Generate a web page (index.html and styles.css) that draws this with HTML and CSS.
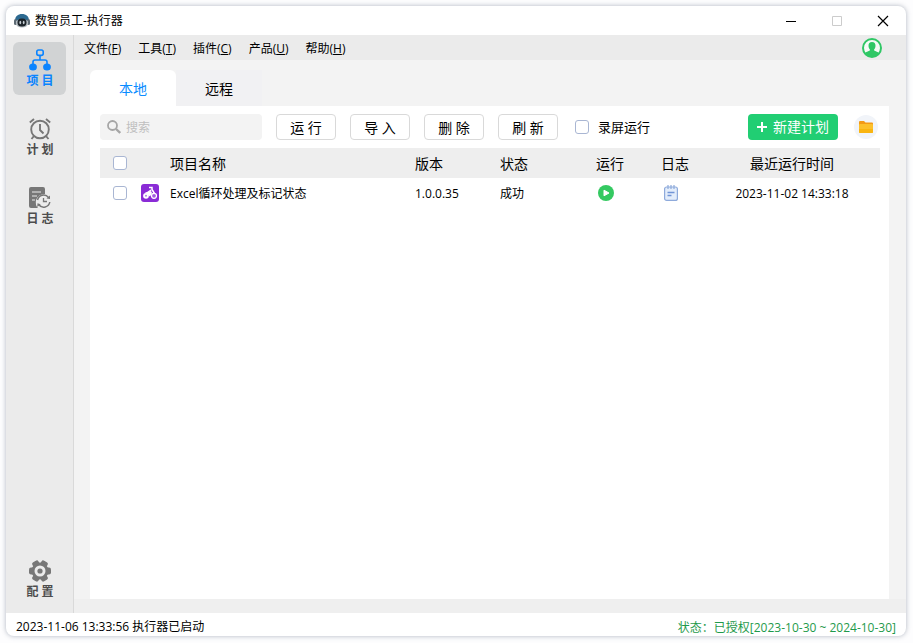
FILE: index.html
```html
<!DOCTYPE html>
<html lang="zh-CN">
<head>
    <meta charset="UTF-8">
    <meta name="viewport" content="width=device-width, initial-scale=1.0">
    <title>数智员工-执行器</title>
    <link rel="stylesheet" href="styles.css">
</head>
<body>
    <div class="window">
        <header class="titlebar">
            <svg class="logo" width="16" height="16" viewBox="0 0 16 16">
                <path d="M1 8C1 3 4 1 8 1s7 2 7 7v1H1z" fill="#2d6a91"/>
                <rect x="0" y="6" width="3" height="6" rx="1.500" fill="#5d6a74"/>
                <rect x="13" y="6" width="3" height="6" rx="1.500" fill="#5d6a74"/>
                <path d="M2 8q6-4 12 0v3q-1 3.500-6 3.500T2 11z" fill="#b4bcc2"/>
                <rect x="3.500" y="5.500" width="9" height="8" rx="4" fill="#1d242a"/>
                <ellipse cx="6.300" cy="9.500" rx=".9" ry="1.800" fill="#c8d0d6"/>
                <ellipse cx="9.700" cy="9.500" rx=".9" ry="1.800" fill="#c8d0d6"/>
            </svg>
            <h1>数智员工-执行器</h1>
            <div class="window-controls">
                <button type="button" aria-label="最小化">
                    <svg width="12" height="12" viewBox="0 0 12 12"><path d="M1 6.500h10" stroke="#000"/></svg>
                </button>
                <button type="button" aria-label="最大化" disabled>
                    <svg width="12" height="12" viewBox="0 0 12 12"><path d="M1.500 1.500h9v9h-9z" fill="none" stroke="#ccc"/></svg>
                </button>
                <button type="button" aria-label="关闭">
                    <svg width="12" height="12" viewBox="0 0 12 12"><path d="M1 1l10 10M11 1L1 11" stroke="#000" stroke-width="1.200"/></svg>
                </button>
            </div>
        </header>

        <div class="body">
            <nav class="sidebar">
                <a href="#project" class="side-item active">
                    <svg width="22" height="22" viewBox="0 0 22 22" fill="none" stroke="#0a84ff" stroke-width="1.600">
                        <rect x="7.800" y="1" width="6.400" height="5.400" rx="1.800"/>
                        <path d="M11 6.500v5M4 15v-2q0-2 2-2h10q2 0 2 2v2"/>
                        <ellipse cx="4" cy="18" rx="3.900" ry="3.600" fill="#0a84ff" stroke="none"/>
                        <ellipse cx="18" cy="18" rx="3.900" ry="3.600" fill="#0a84ff" stroke="none"/>
                    </svg>
                    <span>项 目</span>
                </a>
                <a href="#plan" class="side-item">
                    <svg width="22" height="22" viewBox="0 0 22 22" fill="none" stroke="#777" stroke-width="1.900">
                        <circle cx="11" cy="11.500" r="8.800"/>
                        <path d="M11 6v6l3.500 3.500M.8 4.500L5 1M21.200 4.500L17 1M5 18l-2.500 3M17 18l2.500 3"/>
                    </svg>
                    <span>计 划</span>
                </a>
                <a href="#log" class="side-item">
                    <svg width="22" height="22" viewBox="0 0 22 22" fill="none">
                        <path d="M2 0h12q2 0 2 2v5q-7 0-9 6-1 5 2 8H2q-2 0-2-2V2q0-2 2-2z" fill="#777"/>
                        <path d="M3 5h9M3 9h5M3 13h3" stroke="#ebebeb" stroke-width="1.200"/>
                        <path d="M8.500 13a6.200 6.200 0 0 1 11-2.500M20.800 15a6.200 6.200 0 0 1-11 2.800" stroke="#777" stroke-width="1.500"/>
                        <path d="M17.500 11.500l3.500.500V8.500zM8.200 20l.3-3.700 3.200 1z" fill="#777"/>
                        <path d="M14.500 11v3.500h3.500" stroke="#777" stroke-width="1.300"/>
                    </svg>
                    <span>日 志</span>
                </a>
                <a href="#config" class="side-item side-bottom">
                    <svg width="22" height="22" viewBox="0 0 22 22" fill="none">
                        <g fill="#777">
                            <circle cx="11" cy="11" r="8.500"/>
                            <rect x="0" y="7.500" width="22" height="7" rx="2"/>
                            <rect x="0" y="7.500" width="22" height="7" rx="2" transform="rotate(60 11 11)"/>
                            <rect x="0" y="7.500" width="22" height="7" rx="2" transform="rotate(120 11 11)"/>
                        </g>
                        <circle cx="11" cy="11" r="5.500" fill="#ebebeb"/>
                        <circle cx="11" cy="11" r="2.600" fill="#777"/>
                    </svg>
                    <span>配 置</span>
                </a>
            </nav>

            <div class="content">
                <div class="menubar">
                    <button type="button">文件(<u>F</u>)</button>
                    <button type="button">工具(<u>T</u>)</button>
                    <button type="button">插件(<u>C</u>)</button>
                    <button type="button">产品(<u>U</u>)</button>
                    <button type="button">帮助(<u>H</u>)</button>
                    <button type="button" class="user" aria-label="用户">
                        <svg width="20" height="20" viewBox="0 0 20 20">
                            <circle cx="10" cy="10" r="9" fill="#f5fbf7" stroke="#2fc765" stroke-width="2"/>
                            <path d="M10 4c2.400 0 3.600 1.600 3.500 4-.1 1.800-.8 3-1.500 3.800 0 1.400 3.500 1.700 5 3.400A9 9 0 0 1 10 19a9 9 0 0 1-7-3.800c1.500-1.700 5-2 5-3.400C7.300 11 6.600 9.800 6.500 8 6.400 5.600 7.600 4 10 4z" fill="#2fc765"/>
                        </svg>
                    </button>
                </div>

                <main class="workspace">
                    <div class="tabs" role="tablist">
                        <button type="button" role="tab" class="tab active" aria-selected="true">本地</button>
                        <button type="button" role="tab" class="tab" aria-selected="false">远程</button>
                    </div>

                    <section class="panel">
                        <div class="toolbar">
                            <label class="search">
                                <svg width="14" height="14" viewBox="0 0 14 14" fill="none" stroke="#a6a6a6">
                                    <circle cx="5.500" cy="5.500" r="4.500" stroke-width="1.800"/>
                                    <path d="M9 9l4.200 4" stroke-width="2.400"/>
                                </svg>
                                <input type="text" placeholder="搜索" aria-label="搜索">
                            </label>
                            <button type="button" class="btn">运 行</button>
                            <button type="button" class="btn">导 入</button>
                            <button type="button" class="btn">删 除</button>
                            <button type="button" class="btn">刷 新</button>
                            <label class="record"><input type="checkbox" class="check">录屏运行</label>
                            <button type="button" class="btn-new">
                                <svg width="10" height="10" viewBox="0 0 10 10"><path d="M5 0v10M0 5h10" stroke="#fff" stroke-width="2"/></svg>
                                新建计划
                            </button>
                            <button type="button" class="btn-folder" aria-label="打开文件夹">
                                <svg width="14" height="12" viewBox="0 0 14 12">
                                    <path d="M0 1q0-1 1-1h4l1.500 1.500H13q1 0 1 1V6H0z" fill="#f39a17"/>
                                    <path d="M0 4q0-1 1-1h12q1 0 1 1v7q0 1-1 1H1q-1 0-1-1z" fill="#fcc02c"/>
                                    <path d="M0 8h14v3q0 1-1 1H1q-1 0-1-1z" fill="#f9b512"/>
                                </svg>
                            </button>
                        </div>

                        <table class="projects">
                            <colgroup>
                                <col class="col-check">
                                <col class="col-icon">
                                <col class="col-name">
                                <col class="col-version">
                                <col class="col-status">
                                <col class="col-run">
                                <col class="col-log">
                                <col class="col-time">
                            </colgroup>
                            <thead>
                                <tr>
                                    <th class="cell-check"><input type="checkbox" class="check" aria-label="全选"></th>
                                    <th></th>
                                    <th>项目名称</th>
                                    <th>版本</th>
                                    <th>状态</th>
                                    <th>运行</th>
                                    <th>日志</th>
                                    <th class="cell-time">最近运行时间</th>
                                </tr>
                            </thead>
                            <tbody>
                                <tr>
                                    <td class="cell-check"><input type="checkbox" class="check" aria-label="选择项目"></td>
                                    <td class="cell-icon">
                                        <svg width="18" height="18" viewBox="0 0 18 18">
                                            <rect width="18" height="18" rx="3" fill="#8a2bd6"/>
                                            <path d="M8 3.500h3v2l2.500 4M10 6L6 9" fill="none" stroke="#fff" stroke-width="1.500"/>
                                            <path d="M4 8.500l6-1.500 1 2-2 3.500z" fill="#fff"/>
                                            <circle cx="5" cy="11.800" r="2.900" fill="#fff"/>
                                            <circle cx="5" cy="11.800" r="1" fill="#b678e8"/>
                                            <circle cx="13" cy="11.800" r="2.500" fill="#a55be0" stroke="#fff" stroke-width="1.200"/>
                                        </svg>
                                    </td>
                                    <td>Excel循环处理及标记状态</td>
                                    <td>1.0.0.35</td>
                                    <td>成功</td>
                                    <td>
                                        <button type="button" class="icon-btn" aria-label="运行">
                                            <svg width="16" height="16" viewBox="0 0 16 16">
                                                <circle cx="8" cy="8" r="8" fill="#34c961"/>
                                                <path d="M6 5.200v5.600L11 8z" fill="#fff" stroke="#fff" stroke-linejoin="round"/>
                                            </svg>
                                        </button>
                                    </td>
                                    <td>
                                        <button type="button" class="icon-btn" aria-label="日志">
                                            <svg width="16" height="16" viewBox="0 0 16 16" fill="none" stroke="#8eaadb">
                                                <rect x="1.600" y="2" width="12.800" height="13.400" rx="2" fill="#e3edfb" stroke-width="1.200"/>
                                                <path d="M5 0v4M8 0v4M11 0v4" stroke-width="1.200"/>
                                                <path d="M4.500 7.500h7M4.500 10.500h4" stroke="#7195d6" stroke-width="1.300"/>
                                            </svg>
                                        </button>
                                    </td>
                                    <td class="cell-time">2023-11-02 14:33:18</td>
                                </tr>
                            </tbody>
                        </table>
                    </section>
                </main>
            </div>
        </div>

        <footer class="statusbar">
            <span>2023-11-06 13:33:56 执行器已启动</span>
            <span class="license">状态<span class="colon">：</span>已授权[2023-10-30 ~ 2024-10-30]</span>
        </footer>
    </div>
</body>
</html>
```
FILE: styles.css
```css
* {
    margin: 0;
    padding: 0;
    box-sizing: border-box;
}

body {
    display: flex;
    height: 100vh;
    padding: 6px 7px 7px 6px;
    background-color: #fdfdfe;
    font-family: 'Open Sans', 'Noto Sans CJK SC', sans-serif;
    font-size: 12px;
    line-height: 18px;
    color: #000;
}

button {
    border: none;
    background: none;
    font: inherit;
    color: inherit;
    cursor: pointer;
}

svg {
    display: block;
    flex-shrink: 0;
}

.window {
    flex: 1;
    display: flex;
    flex-direction: column;
    border-radius: 8px;
    overflow: hidden;
    background-color: #fff;
    box-shadow: 0 0 5px rgba(60, 75, 100, 0.4);
}

/* title bar */
.titlebar {
    display: flex;
    align-items: center;
    height: 29px;
    padding-left: 8px;
}

.titlebar h1 {
    margin-left: 5px;
    font-size: 12px;
    font-weight: normal;
}

.window-controls {
    display: flex;
    margin-left: auto;
}

.window-controls button {
    display: flex;
    align-items: center;
    justify-content: center;
    width: 46px;
    height: 28px;
}

.body {
    flex: 1;
    display: flex;
    min-height: 0;
}

/* sidebar */
.sidebar {
    display: flex;
    flex-direction: column;
    align-items: center;
    gap: 16px;
    width: 68px;
    padding: 7px 0;
    background-color: #ebebeb;
    border-right: 1px solid #d9d9d9;
}

.side-item {
    display: flex;
    flex-direction: column;
    align-items: center;
    gap: 1px;
    width: 53px;
    height: 53px;
    padding: 7px 0 0 1px;
    border-radius: 6px;
    color: #4d4d4d;
    font-size: 12px;
    font-weight: bold;
    text-decoration: none;
}

.side-item.active {
    background-color: #d1d3d4;
    color: #0a84ff;
}

.side-bottom {
    margin-top: auto;
}

.content {
    flex: 1;
    display: flex;
    flex-direction: column;
    min-width: 0;
    background-color: #f3f3f3;
}

/* menu */
.menubar {
    display: flex;
    align-items: center;
    gap: 17px;
    height: 25px;
    padding: 0 24px 0 10px;
    background-color: #ebebeb;
}

.menubar button {
    padding-top: 2px;
}

.menubar .user {
    margin-left: auto;
    padding: 0;
}

.workspace {
    flex: 1;
    display: flex;
    flex-direction: column;
    padding: 10px 17px 0 16px;
    border-bottom: 14px solid #efefef;
}

.tabs {
    display: flex;
}

.tab {
    width: 86px;
    height: 36px;
    padding-top: 2px;
    background-color: #f1f1f3;
    font-size: 14px;
}

.tab.active {
    border-radius: 6px 6px 0 0;
    background-color: #fff;
    color: #0a8cff;
}

.panel {
    flex: 1;
    padding: 8px 9px 8px 10px;
    background-color: #fff;
}

/* toolbar */
.toolbar {
    display: flex;
    align-items: center;
    gap: 14px;
    margin-bottom: 8px;
}

.search {
    display: flex;
    align-items: center;
    gap: 5px;
    width: 162px;
    height: 26px;
    padding: 0 7px;
    border-radius: 4px;
    background-color: #f3f3f3;
}

.search input {
    flex: 1;
    min-width: 0;
    padding-top: 2px;
    border: none;
    outline: none;
    background: none;
    font: inherit;
}

.search input::placeholder {
    color: #bfbfbf;
}

.btn {
    width: 60px;
    height: 26px;
    padding-top: 2px;
    border: 1px solid #d9d9d9;
    border-radius: 4px;
    background-color: #fff;
    font-size: 14px;
}

.record {
    display: flex;
    align-items: center;
    gap: 9px;
    margin-left: 3px;
    font-size: 13px;
}

.check {
    appearance: none;
    display: block;
    width: 14px;
    height: 14px;
    border: 1px solid #a9b6d3;
    border-radius: 3px;
    background-color: #fff;
}

.check:checked {
    background-color: #0a84ff;
}

.btn-new {
    display: flex;
    align-items: center;
    justify-content: center;
    gap: 6px;
    width: 90px;
    height: 26px;
    margin-left: auto;
    border-radius: 4px;
    background-color: #21ce73;
    color: #fff;
    font-size: 14px;
}

.btn-folder {
    display: flex;
    align-items: center;
    justify-content: center;
    width: 24px;
    height: 24px;
    margin: 0 2px;
    border-radius: 50%;
    background-color: #f1f4f9;
}

/* project table */
.projects {
    width: 100%;
    table-layout: fixed;
    border-collapse: collapse;
    text-align: left;
}

.projects tr {
    height: 30px;
}

.projects th,
.projects td {
    padding-top: 2px;
}

.projects th {
    background-color: #eee;
    font-size: 14px;
    font-weight: normal;
}

.col-check {
    width: 40px;
}

.col-icon {
    width: 30px;
}

.col-version {
    width: 85px;
}

.col-status {
    width: 96px;
}

.col-run {
    width: 65px;
}

.col-log {
    width: 43px;
}

.col-time {
    width: 176px;
}

.projects .cell-check {
    padding: 0 0 0 13px;
}

.projects .cell-icon {
    padding: 0 0 0 1px;
}

.projects .cell-time {
    text-align: center;
}

.icon-btn {
    display: block;
    padding: 0 0 2px 2px;
}

/* status bar */
.statusbar {
    display: flex;
    align-items: center;
    justify-content: space-between;
    height: 23px;
    padding: 5px 10px 0;
}

.license {
    color: #1f9a4b;
}

.colon {
    font-family: 'Noto Sans CJK TC', sans-serif;
}
```
